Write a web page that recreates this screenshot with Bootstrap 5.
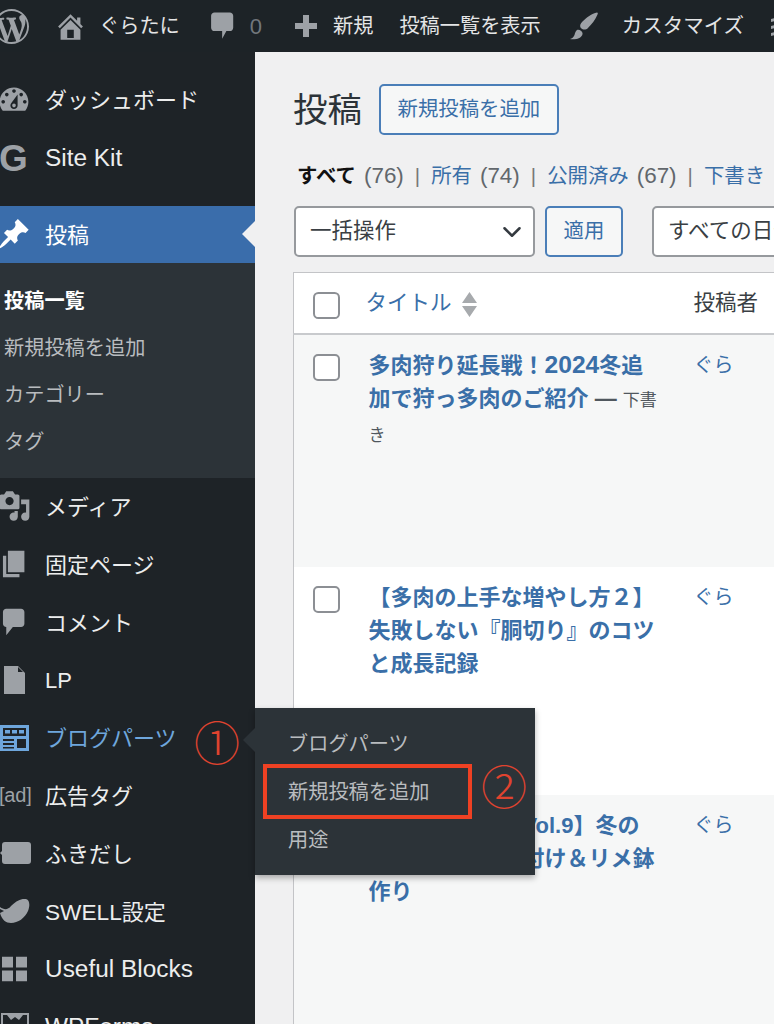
<!DOCTYPE html>
<html lang="ja">
<head>
<meta charset="utf-8">
<title>投稿</title>
<link href="https://cdn.jsdelivr.net/npm/bootstrap@5.3.0/dist/css/bootstrap.min.css" rel="stylesheet">
<style>
html,body{height:1024px;overflow:hidden}
body{background:#f0f0f1;color:#3a3f44;font-family:"Liberation Sans","Noto Sans CJK JP",sans-serif;font-size:20px}
a{text-decoration:none}
.wp-bar{height:52px;background:#1d2327;color:#e4e5e6;white-space:nowrap;overflow:hidden;font-size:20.2px}
.wp-bar svg{fill:#9da1a6;flex-shrink:0}
.bar-logo{margin-left:-6px;margin-right:25px}
.bar-home{margin-right:12px}
.bar-name{margin-right:26px}
.bar-count{color:#72777c;margin:0 32px 0 10px;font-size:22px}
.bar-new{margin:0 26px 0 15px}
.bar-view{margin-right:27px}
.bar-custom{margin:0 27px 0 24px;font-size:20.5px}
.wp-shell{height:972px}
.wp-side{width:255px;flex-shrink:0;background:#1e2327;padding-top:19px;color:#eceded;font-size:22px;line-height:30px}
.side-row{height:57.8px;position:relative}
.side-row>svg,.side-row>.side-icon{position:absolute;left:0;top:50%;transform:translateY(-50%);fill:#9da1a6;color:#9da1a6}
.side-label{margin-left:45px;padding-top:3px}
.lat-wide{font-size:1.11em;line-height:1}
.lat-slim{font-size:1.03em;line-height:1}
.side-g{font-weight:700;font-size:37px;line-height:37px;left:-1px!important}
.side-ad{font-size:20px;letter-spacing:-.2px;left:-1px!important;white-space:nowrap}
.side-active{background:#3a6dab;color:#fff;height:57px;margin-top:19px}
.side-active>svg{fill:#fff}
.side-active::after{content:"";position:absolute;right:0;top:15px;border:13px solid transparent;border-right-color:#f0f0f1;border-left:0}
.side-sub{background:#2c3338;height:215px;padding:15px 0 0 4px;margin-bottom:0;color:#b9bcbf;font-size:20.2px;line-height:47px}
.side-sub .is-current{color:#fff;font-weight:700}
.side-parts{color:#6ea6dc}
.side-parts>svg{fill:#6ea6dc}
.fly-menu{position:absolute;left:255px;top:0;width:280px;height:167px;margin-top:-1px;background:#2c3338;color:#b9bcbf;font-size:20.2px;line-height:48px;padding:12px 0 0 33px;z-index:5;box-shadow:0 3px 6px rgba(0,0,0,.3)}
.fly-menu::before{content:"";position:absolute;left:-12px;top:19px;border:13px solid transparent;border-right-color:#2c3338;border-left:0}
.mark-box{position:absolute;left:8px;top:56px;width:209px;height:55px;border:4px solid #ef4123}
.mark-num{position:absolute;color:#e0432f;font-family:"Noto Sans CJK JP",sans-serif;font-weight:300;font-size:46px;line-height:46px;z-index:6}
.mark-one{left:194px;top:8px}
.mark-two{left:481px;top:52px}
.wp-main{padding-left:38px;min-width:0;flex:1;overflow:hidden}
.page-title{font-size:34.5px;line-height:44px;font-weight:400;margin:0 17px 0 0;color:#2c3338}
.head-row{margin-top:32px}
.wp-btn{font-size:20.4px;line-height:29px;color:#3a6fa8;border:2px solid #4a7eb8;background:#f6f7f7;border-radius:5px;padding:9px 16.500px;white-space:nowrap}
.wp-btn:hover{color:#3a6fa8;background:#f6f7f7;border-color:#4a7eb8}
.status-row{margin-top:27px;line-height:28px;font-size:20.4px;white-space:nowrap;color:#62676c;padding-left:4px}
.status-row a{color:#3a6fa8}
.status-row b{color:#111}
.status-count{font-size:1.1em;line-height:1;margin-left:8px}
.status-sep{margin:0 11px;color:#777}
.filter-row{margin:16px 0 0 1px;width:640px;column-gap:10px}
.wp-select{height:51px;font-size:21.5px;color:#3a3f44;border:2px solid #96999d;border-radius:5px;padding:0 14px;background-size:24px 20px;background-position:right 9px center}
.sel-bulk{width:241px}
.sel-date{width:230px;margin-left:19px;background-image:none}
.btn-apply{width:78px;padding:9px 0;height:51px}
.wp-table{width:640px;table-layout:fixed;margin:15px 0 0;background:#fff;border:1px solid #c3c4c7;border-collapse:collapse;--bs-table-bg:transparent}
.wp-table>*>*>*{border:0;padding:0;box-shadow:none}
.wp-table thead tr{height:61px;border-bottom:2px solid #c8cacd}
.wp-table th{font-weight:400;vertical-align:middle;color:#3a3f44;font-size:21.5px}
.col-check{width:64px}
.col-title{width:328px}
.wp-table th.col-title a{color:#3a6fa8}
.row-a{background:#f6f7f7;height:233px}
.row-b{background:#fff;height:228px}
.row-c{background:#f6f7f7;height:240px}
.wp-table td{vertical-align:top;padding-top:14px!important;color:#3a3f44}
.wp-table td.col-check,.wp-table th.col-check{padding-left:19px!important}
.wp-check{width:27px;height:27px;margin:6px 0 0;border:2px solid #8c8f94;border-radius:6px;background-color:#fff;float:none;display:block}
.wp-table td .wp-check{margin-top:5px}
.post-title{color:#3a6fa8;font-weight:700;font-size:22px;line-height:33px;display:block;padding-left:3px}
.post-title span{white-space:nowrap}
.post-state{color:#50575e;font-size:17px;font-weight:400}
.post-dash{color:#50575e;font-weight:700}
.post-num{font-size:1.12em;line-height:1}
.post-author{color:#3a6fa8;display:block;line-height:28px;padding-top:2px}
.sort-tri{display:inline-block;vertical-align:-7px;margin-left:10px}
.sort-tri svg{display:block;fill:#a7aaad}
</style>
</head>
<body>
<header class="wp-bar d-flex align-items-center">
  <svg class="bar-logo" width="35" height="35" viewBox="0 0 20 20"><path d="M20 10c0-5.51-4.49-10-10-10C4.48 0 0 4.49 0 10c0 5.52 4.48 10 10 10 5.51 0 10-4.48 10-10zM7.78 15.37L4.37 6.22c.55-.02 1.17-.08 1.17-.08.5-.06.44-1.13-.06-1.11 0 0-1.45.11-2.37.11-.18 0-.37 0-.58-.01C4.12 2.69 6.87 1.11 10 1.11c2.33 0 4.45.87 6.05 2.34-.68-.11-1.65.39-1.65 1.58 0 .74.45 1.36.9 2.1.35.61.55 1.36.55 2.46 0 1.49-1.4 5-1.4 5l-3.03-8.37c.54-.02.82-.17.82-.17.5-.05.44-1.25-.06-1.22 0 0-1.44.12-2.38.12-.87 0-2.33-.12-2.33-.12-.5-.03-.56 1.2-.06 1.22l.92.08 1.26 3.41zM17.41 10c.24-.64.74-1.87.43-4.25.7 1.29 1.05 2.71 1.05 4.25 0 3.29-1.73 6.24-4.4 7.78.97-2.59 1.94-5.2 2.92-7.78zM6.1 18.09C3.12 16.65 1.11 13.53 1.11 10c0-1.3.23-2.48.72-3.59C3.25 10.3 4.67 14.2 6.1 18.09zm4.03-6.63l2.58 6.98c-.86.29-1.76.45-2.71.45-.79 0-1.57-.11-2.29-.33.81-2.38 1.62-4.74 2.42-7.1z"/></svg>
  <svg class="bar-home" width="33" height="33" viewBox="0 0 20 20"><path d="M16 8.5l1.53 1.53-1.06 1.06L10 4.62l-6.47 6.47-1.06-1.06L10 2.5l4 4v-2h2v4zm-6-2.46l6 5.99V18H4v-5.97zM12 17v-5H8v5h4z"/></svg>
  <span class="bar-name">ぐらたに</span>
  <svg width="34" height="34" viewBox="0 0 20 20"><path d="M5 2h9c1.100 0 2 .9 2 2v7c0 1.100-.9 2-2 2h-2l-2.500 4.500v-4.500H5c-1.100 0-2-.9-2-2V4c0-1.100.9-2 2-2z"/></svg>
  <span class="bar-count">0</span>
  <svg width="24" height="24" viewBox="0 0 24 24"><path d="M9 1h6v8h8v6h-8v8H9v-8H1V9h8z"/></svg>
  <span class="bar-new">新規</span>
  <span class="bar-view">投稿一覧を表示</span>
  <svg width="30" height="30" viewBox="0 0 30 30"><path d="M29 1.500c1 0 1 1 .5 2-2 5-6 10-10 14-2 2-6 1-7-1-1-2 0-4 2-6C18 7 24 2 29 1.500z"/><path d="M9 19c2-1 5 1 5.500 3 .5 3-3 5.500-6 6-2.500.3-5 .5-6.500 0 2-.5 3.500-1.500 4.500-4 .5-2 1-4 2.500-5z"/></svg>
  <span class="bar-custom">カスタマイズ</span>
  <svg width="10" height="24" viewBox="0 0 10 24"><path d="M0 5l8-2v3L0 8zM0 12l8-2v3l-8 2zM0 19l8-2v3l-8 2z"/></svg>
</header>
<div class="wp-shell d-flex">
  <nav class="wp-side">
    <div class="side-row d-flex align-items-center"><svg style="left:-4px" width="36" height="36" viewBox="0 0 20 20"><path d="M3.760 16h12.480c1.100-1.370 1.760-3.110 1.760-5 0-4.420-3.580-8-8-8s-8 3.580-8 8c0 1.890.66 3.630 1.760 5zM10 4c.55 0 1 .45 1 1s-.45 1-1 1-1-.45-1-1 .45-1 1-1zM6 6c.55 0 1 .45 1 1s-.45 1-1 1-1-.45-1-1 .45-1 1-1zm8 0c.55 0 1 .45 1 1s-.45 1-1 1-1-.45-1-1 .45-1 1-1zm-5.370 5.550L12 7v6c0 1.100-.9 2-2 2s-2-.9-2-2c0-.57.24-1.080.63-1.450zM4 10c.55 0 1 .45 1 1s-.45 1-1 1-1-.45-1-1 .45-1 1-1zm12 0c.55 0 1 .45 1 1s-.45 1-1 1-1-.45-1-1 .45-1 1-1zm-5 3c0-.55-.45-1-1-1s-1 .45-1 1 .45 1 1 1 1-.45 1-1z" fill-rule="evenodd"/></svg><span class="side-label">ダッシュボード</span></div>
    <div class="side-row d-flex align-items-center"><span class="side-icon side-g">G</span><span class="side-label"><span class="lat-wide">Site Kit</span></span></div>
    <div class="side-row side-active d-flex align-items-center"><svg style="left:-3px" width="34" height="34" viewBox="0 0 20 20"><path d="M10.440 3.020l1.820-1.820 6.360 6.350-1.830 1.820c-1.050-.68-2.480-.57-3.410.36l-.75.75c-.92.93-1.040 2.350-.35 3.410l-1.830 1.820-2.410-2.410-2.800 2.790c-.42.42-3.380 2.710-3.800 2.290s1.860-3.390 2.280-3.810l2.790-2.790L4.100 9.360l1.830-1.820c1.050.69 2.480.57 3.400-.36l.75-.75c.93-.92 1.050-2.350.36-3.410z"/></svg><span class="side-label">投稿</span></div>
    <ul class="side-sub list-unstyled">
      <li class="is-current">投稿一覧</li>
      <li>新規投稿を追加</li>
      <li>カテゴリー</li>
      <li>タグ</li>
    </ul>
    <div class="side-row d-flex align-items-center"><svg style="left:-2px" width="33" height="33" viewBox="0 0 20 20"><path d="M13 11V4c0-.55-.45-1-1-1h-1.670L9 1H5L3.670 3H2c-.55 0-1 .45-1 1v7c0 .55.45 1 1 1h10c.55 0 1-.45 1-1zM7 4.500c1.380 0 2.500 1.120 2.500 2.500S8.380 9.500 7 9.500 4.500 8.380 4.500 7 5.620 4.500 7 4.500zM14 6h5v10.500c0 1.380-1.120 2.500-2.500 2.500S14 17.880 14 16.500s1.120-2.500 2.500-2.500c.17 0 .34.02.5.05V9h-3V6zm-4 8.050V13h2v3.500c0 1.380-1.120 2.500-2.500 2.500S7 17.880 7 16.500 8.120 14 9.500 14c.17 0 .34.02.5.05z"/></svg><span class="side-label">メディア</span></div>
    <div class="side-row d-flex align-items-center"><svg style="left:-2px" width="33" height="33" viewBox="0 0 20 20"><path d="M6 15V2h10v13H6zm-1 1h8v2H3V5h2v11z"/></svg><span class="side-label">固定ページ</span></div>
    <div class="side-row d-flex align-items-center"><svg style="left:-2px" width="33" height="33" viewBox="0 0 20 20"><path d="M5 2h9c1.100 0 2 .9 2 2v7c0 1.100-.9 2-2 2h-5l-4 5v-5c-1.100 0-2-.9-2-2V4c0-1.100.9-2 2-2z"/></svg><span class="side-label">コメント</span></div>
    <div class="side-row d-flex align-items-center"><svg style="left:4px" width="21" height="28" viewBox="0 0 21 28"><path d="M0 0h14l7 7v21H0z"/><path d="M14 1v5h5z" fill="#1e2327"/></svg><span class="side-label">LP</span></div>
    <div class="side-row side-parts d-flex align-items-center"><svg style="left:0" width="29" height="26" viewBox="0 0 29 26"><path fill-rule="evenodd" d="M0 0h29v26H0zM3 3v8h23V3zM5 5h5v3.500H5zM12 5h5v3.500h-5zM19 5h5v3.500h-5zM17 14v9h9v-9zM3 14v2h11v-2zM3 18v2h11v-2zM3 22v1.500h11V22z"/></svg><span class="side-label">ブログパーツ</span>
      <div class="fly-menu">
        <div>ブログパーツ</div>
        <div>新規投稿を追加</div>
        <div>用途</div>
        <div class="mark-box"></div>
      </div>
      <span class="mark-num mark-one">①</span>
      <span class="mark-num mark-two">②</span>
    </div>
    <div class="side-row d-flex align-items-center"><span class="side-icon side-ad">[ad]</span><span class="side-label">広告タグ</span></div>
    <div class="side-row d-flex align-items-center"><svg style="left:0" width="31" height="22" viewBox="0 0 31 22"><path d="M5 0h23c2 0 3 1 3 3v16c0 2-1 3-3 3H5c-2 0-3-1-3-3v-6l-2-2 2-2V3c0-2 1-3 3-3z"/></svg><span class="side-label">ふきだし</span></div>
    <div class="side-row d-flex align-items-center"><svg style="left:0" width="30" height="24" viewBox="0 0 30 24"><path d="M0 8c4 3 8 3 11-1 4-4 10-8 15-7 4 1 4 7 2 12-3 7-10 12-17 12C6 24 2 21 0 14l4-2-4-2z"/></svg><span class="side-label"><span class="lat-slim">SWELL</span>設定</span></div>
    <div class="side-row d-flex align-items-center"><svg style="left:2px" width="25" height="25" viewBox="0 0 25 25"><path d="M0 0h11v11H0zM14 0h11v11H14zM0 14h11v11H0zM14 14h11v11H14z"/></svg><span class="side-label"><span class="lat-wide">Useful Blocks</span></span></div>
    <div class="side-row d-flex align-items-center"><svg style="left:1px" width="28" height="28" viewBox="0 0 28 28"><path fill-rule="evenodd" d="M0 0h28v28H0zM2 2v24h24V2h-4l-4 5-4-3-4 3-4-5z"/></svg><span class="side-label"><span class="lat-wide">WPForms</span></span></div>
  </nav>
  <main class="wp-main">
    <div class="head-row d-flex align-items-center">
      <h1 class="page-title">投稿</h1>
      <a class="btn wp-btn" href="#">新規投稿を追加</a>
    </div>
    <div class="status-row"><b>すべて</b><span class="status-count">(76)</span><span class="status-sep">|</span><a href="#">所有</a><span class="status-count">(74)</span><span class="status-sep">|</span><a href="#">公開済み</a><span class="status-count">(67)</span><span class="status-sep">|</span><a href="#">下書き</a></div>
    <div class="filter-row d-flex">
      <select class="form-select wp-select sel-bulk flex-shrink-0"><option>一括操作</option></select>
      <button class="btn wp-btn btn-apply flex-shrink-0" type="button">適用</button>
      <select class="form-select wp-select sel-date flex-shrink-0"><option>すべての日付</option></select>
    </div>
    <table class="table wp-table">
      <thead>
        <tr>
          <th class="col-check"><input class="form-check-input wp-check" type="checkbox" aria-label="すべて選択"></th>
          <th class="col-title"><a href="#">タイトル</a><span class="sort-tri"><svg width="15" height="25" viewBox="0 0 15 25"><path d="M7.500 0L15 11H0zM0 14h15L7.500 25z"/></svg></span></th>
          <th>投稿者</th>
        </tr>
      </thead>
      <tbody>
        <tr class="row-a">
          <td class="col-check"><input class="form-check-input wp-check" type="checkbox" aria-label="選択"></td>
          <td class="col-title"><a class="post-title" href="#"><span>多肉狩り延長戦！<span class="post-num">2024</span>冬追</span><br><span>加で狩っ多肉のご紹介 <span class="post-dash">—</span> <span class="post-state">下書</span></span><br><span class="post-state">き</span></a></td>
          <td><a class="post-author" href="#">ぐら</a></td>
        </tr>
        <tr class="row-b">
          <td class="col-check"><input class="form-check-input wp-check" type="checkbox" aria-label="選択"></td>
          <td class="col-title"><a class="post-title" href="#"><span>【多肉の上手な増やし方２】</span><br><span>失敗しない『胴切り』のコツ</span><br><span>と成長記録</span></a></td>
          <td><a class="post-author" href="#">ぐら</a></td>
        </tr>
        <tr class="row-c">
          <td class="col-check"><input class="form-check-input wp-check" type="checkbox" aria-label="選択"></td>
          <td class="col-title"><a class="post-title" href="#"><span>【多肉の寄せ植Vol.9】冬の</span><br><span>多肉たちの植え付け＆リメ鉢</span><br><span>作り</span></a></td>
          <td><a class="post-author" href="#">ぐら</a></td>
        </tr>
      </tbody>
    </table>
  </main>
</div>
</body>
</html>
